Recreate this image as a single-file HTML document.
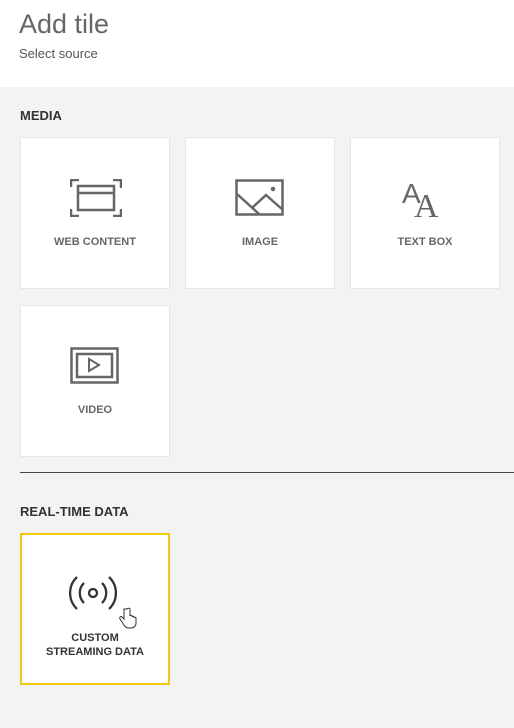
<!DOCTYPE html>
<html><head><style>
body{margin:0;width:514px;height:728px;background:#f3f3f3;font-family:"Liberation Sans",sans-serif;position:relative;overflow:hidden}
.hdr{position:absolute;left:0;top:0;width:514px;height:87px;background:#fff}
.t{position:absolute;left:19px;top:9px;font-size:27px;color:#666;}
.s{position:absolute;left:19px;top:46px;font-size:13px;color:#555}
.sec{position:absolute;left:20px;font-size:13px;font-weight:bold;color:#333}
.tile{position:absolute;width:148px;height:150px;background:#fff;border:1px solid #e6e6e6}
.tile svg{position:absolute;left:49px;top:41px}
.lab{position:absolute;left:0;width:100%;top:98px;text-align:center;font-size:11px;font-weight:bold;color:#666}
</style></head><body>
<div class="hdr"><div class="t">Add tile</div><div class="s">Select source</div></div>
<div class="sec" style="top:108px">MEDIA</div>
<div class="tile" style="left:20px;top:137px">
<svg width="52" height="38" viewBox="0 0 52 38" fill="none" stroke="#666" stroke-width="2.5"><path d="M1 8V1h8M43 1h8v8M1 30v7h8M43 37h8v-7"/><rect x="8" y="7" width="36" height="24"/><path d="M8 14h36"/></svg>
<div class="lab">WEB CONTENT</div></div>
<div class="tile" style="left:185px;top:137px">
<svg width="52" height="38" viewBox="0 0 52 38" fill="none" stroke="#666" stroke-width="2.5"><rect x="1.5" y="1.5" width="46" height="34"/><path d="M2 15l22 20M18 28l13-12 17 15"/><circle cx="38" cy="10" r="1" fill="#666"/></svg>
<div class="lab">IMAGE</div></div>
<div class="tile" style="left:350px;top:137px">
<svg width="52" height="40" viewBox="0 0 52 40" fill="#666"><text x="2" y="24" font-family="Liberation Sans" font-size="28" fill="#666">A</text><text x="14" y="38" font-family="Liberation Serif" font-size="34" fill="#666">A</text></svg>
<div class="lab">TEXT BOX</div></div>
<div class="tile" style="left:20px;top:305px">
<svg width="52" height="38" viewBox="0 0 52 38" fill="none" stroke="#666" stroke-width="2.5"><rect x="1.5" y="1.5" width="46" height="34"/><rect x="7" y="7" width="35" height="23"/><path d="M19 12v12l10-6z" stroke-width="2"/></svg>
<div class="lab">VIDEO</div></div>
<div style="position:absolute;left:20px;top:472px;width:494px;height:1px;background:#444"></div>
<div class="sec" style="top:504px">REAL-TIME DATA</div>
<div class="tile" style="left:20px;top:533px;width:146px;height:148px;border:2px solid #f2c811">
<svg width="52" height="36" viewBox="0 0 52 36" fill="none" stroke="#333" stroke-width="2.3" style="left:47px;top:40px"><circle cx="24" cy="18" r="4"/><path d="M15 8a14 14 0 0 0 0 20M33 8a14 14 0 0 1 0 20M8 2a22 22 0 0 0 0 32M40 2a22 22 0 0 1 0 32"/></svg>
<svg width="18" height="22" viewBox="0 0 18 22" fill="#fff" stroke="#333" stroke-width="1" style="left:97px;top:72px"><path d="M5 2v10l-2-2c-1-1-3 0-2 2l4 6c1 2 3 3 5 3h2c3 0 5-2 5-5v-5c0-1-2-1-2 0v-1c0-1-2-1-2 0v-1c0-1-2-1-2 0V2c0-1-3-1-3 0z"/></svg>
<div class="lab" style="top:96px;color:#333;line-height:14px">CUSTOM<br>STREAMING DATA</div></div>
</body></html>
